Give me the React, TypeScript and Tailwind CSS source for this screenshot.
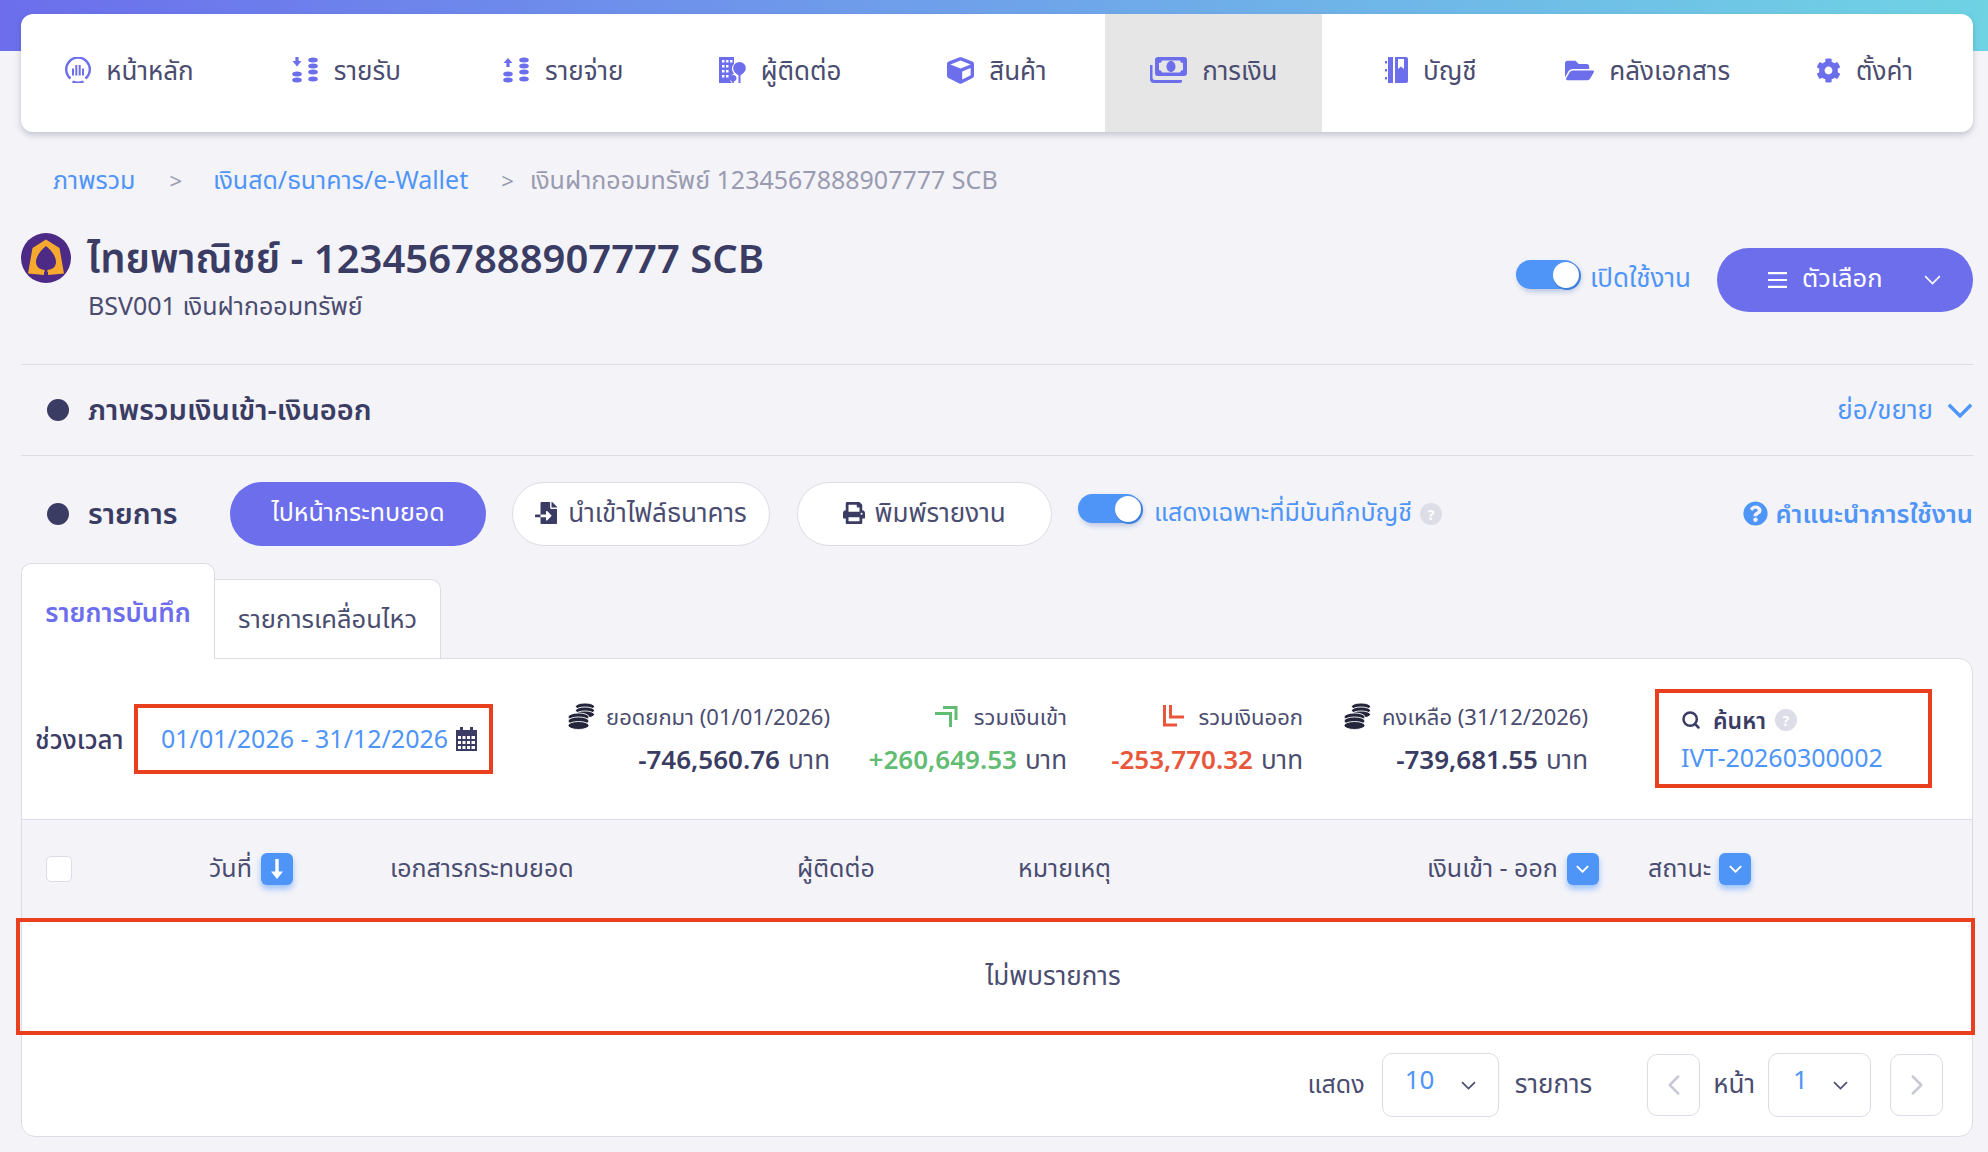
import { FaCube, FaFolderOpen, FaCog, FaPrint, FaFileImport, FaQuestionCircle } from "react-icons/fa";
import { LuSearch, LuChevronLeft, LuChevronRight } from "react-icons/lu";

const STACK = "font-['Noto_Sans','Noto_Sans_Thai',sans-serif]";

function Chevron({ className, sw = 1.1 }: { className: string; sw?: number }) {
  return (
    <svg viewBox="0 0 12 7" className={className} fill="none" stroke="currentColor">
      <path d="M.8.8L6 6l5.200-5.200" strokeWidth={sw} />
    </svg>
  );
}

function HomeIcon() {
  return (
    <svg viewBox="0 0 26 26" className="w-[26px] h-[26px] text-[#6c6eec]" fill="none" stroke="currentColor">
      <path d="M5.500 21.500A11.800 11.800 0 1 1 20.500 21.500" strokeWidth="2.400" />
      <path d="M7.500 24.500a14 14 0 0 0 11 0" strokeWidth="2.400" />
      <path d="M8 11.500v7M11.300 8v10.500M14.700 8v10.500M18 11.500v7" strokeWidth="2" />
    </svg>
  );
}

function Coin({ cx, cy }: { cx: number; cy: number }) {
  return <ellipse cx={cx} cy={cy} rx="4.800" ry="2.500" fill="currentColor" />;
}

function StackIcon({ up }: { up?: boolean }) {
  return (
    <svg viewBox="0 0 27 26" className="w-[27px] h-[26px] text-[#6c6eec]">
      {up ? (
        <path d="M5 1l4.500 5H6.600v4H3.400V6H.5z" fill="currentColor" />
      ) : (
        <path d="M3.400 0h3.200v4H9.500L5 9.500.5 4h2.900z" fill="currentColor" />
      )}
      <Coin cx={5} cy={17} />
      <Coin cx={5} cy={23} />
      <Coin cx={21} cy={3} />
      <Coin cx={21} cy={9} />
      <Coin cx={21} cy={15} />
      <Coin cx={21} cy={22} />
    </svg>
  );
}

function ContactIcon() {
  return (
    <svg viewBox="0 0 27 26" className="w-[27px] h-[26px] text-[#6c6eec]">
      <path
        fillRule="evenodd"
        fill="currentColor"
        d="M0 0h15v7a6 6 0 0 0-1 8l1 2a5 5 0 0 0-2 9H0zM3 3v2.500h2.500V3zM7 3v2.500h2.500V3zM11 3v2.500h2.500V3zM3 8v2.500h2.500V8zM7 8v2.500h2.500V8zM3 13v2.500h2.500V13zM7 13v2.500h2.500V13zM3 18v2.500h2.500V18zM7 18v2.500h2.500V18z"
      />
      <path fill="currentColor" d="M20.500 5a6.300 6.300 0 0 1 6.300 6.300c0 3-3 5.700-5.300 7V26h-2v-7.700c-2.300-1.300-5.300-4-5.300-7A6.300 6.300 0 0 1 20.500 5zM14 18a3.500 3.500 0 0 1 3.500 3.500c0 1.500-1.500 2.500-2.700 3.200V26h-1.600v-1.300c-1.200-.7-2.700-1.700-2.700-3.200A3.500 3.500 0 0 1 14 18z" />
    </svg>
  );
}

function MoneyIcon() {
  return (
    <svg viewBox="0 0 37 26" className="w-[37px] h-[26px] text-[#6c6eec]">
      <path
        fillRule="evenodd"
        fill="currentColor"
        d="M8 0h26a3 3 0 0 1 3 3v13a3 3 0 0 1-3 3H8a3 3 0 0 1-3-3V3a3 3 0 0 1 3-3zM12 3.500a3 3 0 0 1-3 2.500v7a3 3 0 0 1 3 2.500h18a3 3 0 0 1 3-2.500V6a3 3 0 0 1-3-2.500zM21 4c2.500 0 4.500 2.500 4.500 5.500S23.500 15 21 15s-4.500-2.500-4.500-5.500S18.500 4 21 4z"
      />
      <path fill="currentColor" d="M0 8h2.500v12.500A2.500 2.500 0 0 0 5 23h27v1a2 2 0 0 1-2 2H4a4 4 0 0 1-4-4z" />
    </svg>
  );
}

function BookIcon() {
  return (
    <svg viewBox="0 0 23 26" className="w-[23px] h-[26px] text-[#6c6eec]">
      <path
        fillRule="evenodd"
        fill="currentColor"
        d="M3 0h5v26H3zM10 0h11a2 2 0 0 1 2 2v22a2 2 0 0 1-2 2H10zM13 2v10l3-2.500 3 2.500V2z"
      />
      <path fill="currentColor" d="M0 4h2v2.500H0zM0 12h2v2.500H0zM0 20h2v2.500H0z" />
    </svg>
  );
}

function CoinsIcon() {
  const back = [3.5, 7.5, 11.5];
  const front = [14, 18, 22.5];
  return (
    <svg viewBox="0 0 27 27" className="w-[27px] h-[27px]" fill="#24253a" stroke="#ffffff" strokeWidth="0.9">
      {back.map((y) => (
        <ellipse key={y} cx="17" cy={y} rx="9.500" ry="3.500" />
      ))}
      {front.map((y) => (
        <ellipse key={y} cx="10.500" cy={y} rx="10.500" ry="4" />
      ))}
    </svg>
  );
}

function CalendarIcon() {
  return (
    <svg viewBox="0 0 21 24" className="w-[21px] h-[24px]" fill="#3a3c64">
      <path d="M4 0h3v3H4zM14 0h3v3h-3z" />
      <path
        fillRule="evenodd"
        d="M0 3h21v21H0zM2 9v3h3V9zM6.500 9v3h3V9zM11 9v3h3V9zM15.500 9v3h3.500V9zM2 14v3h3v-3zM6.500 14v3h3v-3zM11 14v3h3v-3zM15.500 14v3h3.500v-3zM2 19v3h3v-3zM6.500 19v3h3v-3zM11 19v3h3v-3zM15.500 19v3h3.500v-3z"
      />
    </svg>
  );
}

function Arrow({ out }: { out?: boolean }) {
  return (
    <svg viewBox="0 0 23 22" className="w-[23px] h-[22px]" fill="none" strokeWidth="3">
      {out ? (
        <path d="M2.500 0v20H15M8.500 0v12H22" stroke="#e8573c" />
      ) : (
        <path d="M0 8.500h15.500V22M8 2.500h13V15" stroke="#62bd72" />
      )}
    </svg>
  );
}

function ScbLogo() {
  return (
    <svg viewBox="0 0 50 50" className="w-[50px] h-[50px] shrink-0">
      <circle cx="25" cy="25" r="25" fill="#4d2a85" />
      <path
        fillRule="evenodd"
        fill="#f5a92f"
        d="M25 6.500L38.500 15 43 40.500 27 42V39h-4v3L7 40.500 11.500 15zM25 13c-5 4-10 10-10 16 0 5 4 8 10 8s10-3 10-8c0-6-5-12-10-16z"
      />
      <path d="M23.600 34h2.800v9h-2.800z" fill="#4d2a85" />
    </svg>
  );
}

function MenuIcon() {
  return (
    <svg viewBox="0 0 19 16" className="w-[19px] h-[16px]" fill="currentColor">
      <path d="M0 0h19v2.200H0zM0 6.900h19v2.200H0zM0 13.800h19V16H0z" />
    </svg>
  );
}

function Toggle() {
  return (
    <div className="mb-[11px] w-[63px] h-[29px] rounded-full bg-[#4f95f7] flex items-center justify-end shadow-[2px_3px_5px_rgba(60,100,180,0.3)]">
      <div className="w-[26px] h-[26px] rounded-full bg-white shadow-[1px_1px_0_1px_#3f7fdc]" />
    </div>
  );
}

function Hint() {
  return (
    <span className="w-[22px] h-[22px] rounded-full bg-[#dcdde6] text-white text-[14px] font-bold flex items-center justify-center">?</span>
  );
}

function BlueBtn({ down }: { down?: boolean }) {
  return (
    <span className="w-[32px] h-[32px] rounded-[6px] bg-[#4f95f7] text-white flex items-center justify-center shadow-[0_4px_6px_rgba(79,149,247,0.55)]">
      {down ? (
        <svg viewBox="0 0 20 22" className="w-[20px] h-[22px]" fill="currentColor">
          <path d="M8.300 1h3.400v12.500h4.300L10 21 4 13.500h4.300z" />
        </svg>
      ) : (
        <Chevron className="w-[13px] h-[8px]" sw={1.8} />
      )}
    </span>
  );
}

const navItems = [
  { label: "หน้าหลัก", icon: <HomeIcon /> },
  { label: "รายรับ", icon: <StackIcon /> },
  { label: "รายจ่าย", icon: <StackIcon up /> },
  { label: "ผู้ติดต่อ", icon: <ContactIcon /> },
  { label: "สินค้า", icon: <FaCube size={27} color="#6c6eec" /> },
  { label: "การเงิน", icon: <MoneyIcon />, active: true },
  { label: "บัญชี", icon: <BookIcon /> },
  { label: "คลังเอกสาร", icon: <FaFolderOpen size={29} color="#6c6eec" /> },
  { label: "ตั้งค่า", icon: <FaCog size={25} color="#6c6eec" /> },
];

const stats = [
  { icon: <CoinsIcon />, gap: "gap-[11px]", width: "w-[353px]", label: "ยอดยกมา (01/01/2026)", value: "-746,560.76", color: "text-[#3a3c64]" },
  { icon: <Arrow />, gap: "gap-[16px]", width: "w-[237px]", label: "รวมเงินเข้า", value: "+260,649.53", color: "text-[#62bd72]" },
  { icon: <Arrow out />, gap: "gap-[14px]", width: "w-[236px]", label: "รวมเงินออก", value: "-253,770.32", color: "text-[#e8573c]" },
  { icon: <CoinsIcon />, gap: "gap-[11px]", width: "w-[285px]", label: "คงเหลือ (31/12/2026)", value: "-739,681.55", color: "text-[#3a3c64]" },
];

export default function App() {
  return (
    <div className={`${STACK} relative w-[1988px] h-[1152px] overflow-hidden bg-[#f3f3f8] text-[#4a4c70] text-[26px]`}>
      <div className="h-[51px] bg-gradient-to-r from-[#6c6eec] to-[#6fd3e4]" />

      {/* top menu */}
      <nav className="relative -mt-[37px] ml-[21px] mr-[15px] h-[118px] grid grid-cols-9 bg-white rounded-[12px] shadow-[0_3px_6px_rgba(60,60,90,0.25)] overflow-hidden">
        {navItems.map((item) => (
          <div
            key={item.label}
            className={`flex items-center justify-center gap-[15px] pb-[6px] ${item.active ? "bg-[#e6e6e6]" : ""}`}
          >
            {item.icon}
            <span className="leading-none">{item.label}</span>
          </div>
        ))}
      </nav>

      <main className="pl-[21px] pr-[15px]">
        {/* breadcrumb */}
        <div className="mt-[32px] h-[34px] pl-[32px] pb-[2px] flex items-center text-[#4f95f7] text-[25px]">
          <span>ภาพรวม</span>
          <span className="ml-[34px] text-[#9a9bb0] text-[22px]">&gt;</span>
          <span className="ml-[31px]">เงินสด/ธนาคาร/e-Wallet</span>
          <span className="ml-[33px] text-[#9a9bb0] text-[22px]">&gt;</span>
          <span className="ml-[16px] text-[#9a9bb0]">เงินฝากออมทรัพย์ 1234567888907777 SCB</span>
        </div>

        {/* account title */}
        <div className="mt-[35px] h-[131px] flex items-start justify-between">
          <div className="flex gap-[16px]">
            <ScbLogo />
            <div>
              <h1 className="h-[50px] flex items-center text-[40px] font-semibold text-[#3a3c64] leading-none">
                ไทยพาณิชย์ - 1234567888907777 SCB
              </h1>
              <p className="mt-[7px] ml-[1px] text-[25px] text-[#4a4c70] leading-[30px]">BSV001 เงินฝากออมทรัพย์</p>
            </div>
          </div>
          <div className="flex items-center mt-[15px]">
            <Toggle />
            <span className="ml-[11px] pb-[5px] text-[#4f95f7]">เปิดใช้งาน</span>
            <button className="ml-[26px] w-[256px] h-[64px] rounded-full bg-[#6c6eec] text-white flex items-center pl-[51px] pr-[32px] text-[25.5px]">
              <MenuIcon />
              <span className="ml-[15px] pb-[5px]">ตัวเลือก</span>
              <Chevron className="ml-auto w-[17px] h-[10px]" />
            </button>
          </div>
        </div>

        {/* overview */}
        <div className="h-[91px] border-t border-[#dcdce4] flex items-center">
          <span className="ml-[26px] w-[22px] h-[22px] rounded-full bg-[#3a3c64]" />
          <span className="ml-[19px] pb-[2px] text-[#3a3c64] font-semibold text-[29px]">ภาพรวมเงินเข้า-เงินออก</span>
          <span className="ml-auto pb-[2px] text-[#4f95f7]">ย่อ/ขยาย</span>
          <Chevron className="ml-[14px] w-[26px] h-[15px] text-[#4f95f7]" sw={1.6} />
        </div>

        {/* transactions toolbar */}
        <div className="border-t border-[#dcdce4] pt-[26px] h-[108px] flex items-start">
          <div className="h-[64px] flex items-center">
            <span className="ml-[26px] w-[22px] h-[22px] rounded-full bg-[#3a3c64]" />
            <span className="ml-[19px] pb-[2px] w-[142px] text-[#3a3c64] font-semibold text-[29px]">รายการ</span>
            <button className="w-[256px] h-[64px] rounded-full bg-[#6c6eec] text-white pb-[4px] text-[25px]">ไปหน้ากระทบยอด</button>
            <button className="ml-[26px] w-[258px] h-[64px] rounded-full bg-white border border-[#dcdce6] flex items-center justify-center gap-[11px] pb-[3px]">
              <FaFileImport size={22} color="#3a3c64" />
              <span>นำเข้าไฟล์ธนาคาร</span>
            </button>
            <button className="ml-[27px] w-[255px] h-[64px] rounded-full bg-white border border-[#dcdce6] flex items-center justify-center gap-[9px] pb-[3px]">
              <FaPrint size={22} color="#3a3c64" />
              <span>พิมพ์รายงาน</span>
            </button>
            <span className="ml-[26px]">
              <Toggle />
            </span>
            <span className="ml-[13px] pb-[4px] text-[#4f95f7] text-[25px]">แสดงเฉพาะที่มีบันทึกบัญชี</span>
            <span className="ml-[8px]">
              <Hint />
            </span>
          </div>
          <div className="ml-auto h-[64px] pb-[2px] flex items-center gap-[7px] text-[#4f95f7] font-semibold text-[25.5px]">
            <FaQuestionCircle size={25} />
            <span>คำแนะนำการใช้งาน</span>
          </div>
        </div>

        {/* tabs */}
        <div className="relative z-10 -mb-px h-[96px] flex items-end">
          <div className="w-[194px] h-[96px] bg-white border border-b-0 border-[#dcdce6] rounded-t-[10px] pt-[31px] text-center text-[#6c6eec] font-semibold leading-[34px]">
            รายการบันทึก
          </div>
          <div className="w-[226px] h-[80px] pb-[2px] bg-white border border-l-0 border-[#dcdce6] rounded-tr-[10px] flex items-center justify-center text-[25.5px]">
            รายการเคลื่อนไหว
          </div>
        </div>

        {/* card */}
        <section className="h-[479px] bg-white border border-[#dcdce6] rounded-b-[14px] rounded-tr-[14px]">
          <div className="h-[161px] border-b border-[#dcdce6] flex items-center pl-[13px]">
            <span className="w-[126px] font-medium text-[#3a3c64]">ช่วงเวลา</span>
            <span className="text-[#4f95f7] w-[295px] whitespace-nowrap text-[25px]">01/01/2026 - 31/12/2026</span>
            <CalendarIcon />
            {stats.map((s) => (
              <div key={s.label} className={`${s.width} -mt-[3px] text-right`}>
                <div className={`flex items-center justify-end ${s.gap} h-[30px] text-[22px]`}>
                  {s.icon}
                  <span>{s.label}</span>
                </div>
                <div className="mt-[13px] h-[30px] flex items-center justify-end gap-[8px]">
                  <span className={`font-semibold ${s.color}`}>{s.value}</span>
                  <span>บาท</span>
                </div>
              </div>
            ))}
            <div className="ml-[93px]">
              <div className="flex items-center h-[30px] pb-[2px] text-[#3a3c64]">
                <LuSearch size={20} strokeWidth={3} />
                <span className="ml-[12px] font-semibold text-[23px]">ค้นหา</span>
                <span className="ml-[9px]">
                  <Hint />
                </span>
              </div>
              <div className="mt-[6px] h-[30px] leading-[30px] text-[#4f95f7] text-[25px]">IVT-20260300002</div>
            </div>
          </div>

          <div className="h-[102px] bg-[#f4f4f8] grid grid-cols-[187px_181px_407px_221px_409px_221px_1fr] items-center pb-[4px] text-[25px]">
            <div className="pl-[24px]">
              <div className="w-[26px] h-[26px] rounded-[5px] bg-white border border-[#dcdce6]" />
            </div>
            <div className="flex items-center gap-[9px]">
              <span className="pb-[2px]">วันที่</span>
              <BlueBtn down />
            </div>
            <div className="pb-[2px]">เอกสารกระทบยอด</div>
            <div className="pb-[2px]">ผู้ติดต่อ</div>
            <div className="pb-[2px]">หมายเหตุ</div>
            <div className="flex items-center gap-[9px]">
              <span className="pb-[2px]">เงินเข้า - ออก</span>
              <BlueBtn />
            </div>
            <div className="flex items-center gap-[8px]">
              <span className="pb-[2px]">สถานะ</span>
              <BlueBtn />
            </div>
          </div>

          <div className="h-[106px] flex items-center justify-center pl-[112px]">ไม่พบรายการ</div>

          <div className="h-[108px] flex items-center justify-end pr-[29px] pt-[6px]">
            <span className="pb-[3px] text-[25px]">แสดง</span>
            <div className="ml-[17px] w-[117px] h-[64px] border border-[#dcdce6] rounded-[10px] flex items-center pl-[22px] pr-[22px]">
              <span className="text-[#4f95f7] -mt-[12px]">10</span>
              <Chevron className="ml-auto w-[15px] h-[9px]" sw={1.3} />
            </div>
            <span className="ml-[16px] pb-[3px]">รายการ</span>
            <div className="ml-[55px] w-[53px] h-[62px] border border-[#dcdce6] rounded-[10px] flex items-center justify-center text-[#c8c9d6]">
              <LuChevronLeft size={34} strokeWidth={1.8} />
            </div>
            <span className="ml-[13px] pb-[3px]">หน้า</span>
            <div className="ml-[13px] w-[103px] h-[64px] border border-[#dcdce6] rounded-[10px] flex items-center pl-[24px] pr-[22px]">
              <span className="text-[#4f95f7] -mt-[12px]">1</span>
              <Chevron className="ml-auto w-[15px] h-[9px]" sw={1.3} />
            </div>
            <div className="ml-[19px] w-[53px] h-[62px] border border-[#dcdce6] rounded-[10px] flex items-center justify-center text-[#c8c9d6]">
              <LuChevronRight size={34} strokeWidth={1.8} />
            </div>
          </div>
        </section>
      </main>

      {/* red annotation boxes */}
      <div className="absolute left-[134px] top-[704px] w-[359px] h-[70px] border-[4px] border-[#e8401f]" />
      <div className="absolute left-[1655px] top-[689px] w-[277px] h-[99px] border-[4px] border-[#e8401f]" />
      <div className="absolute left-[16px] top-[918px] w-[1959px] h-[117px] border-[4px] border-[#e8401f]" />
    </div>
  );
}
